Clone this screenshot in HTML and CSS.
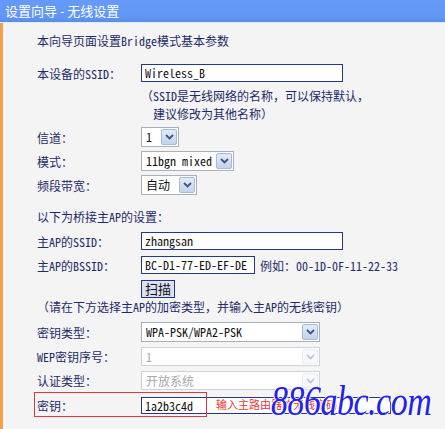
FILE: index.html
```html
<!DOCTYPE html>
<html lang="zh-CN">
<head>
  <meta charset="UTF-8" />
  <title>设置向导 - 无线设置</title>
  <link rel="stylesheet" href="styles.css">
</head>
<body>
  <div class="page">
    <div class="title-bar">设置向导 - 无线设置</div>
    <div class="panel">
      <div class="heading">本向导页面设置Bridge模式基本参数</div>

      <div class="row r-ssid">
        <div class="label">本设备的SSID：</div>
        <div class="input w202">Wireless_B</div>
      </div>
      <div class="note">
        <div>（SSID是无线网络的名称，可以保持默认，</div>
        <div class="indent">建议修改为其他名称）</div>
      </div>

      <div class="row r-sel first">
        <div class="label">信道：</div>
        <div class="select w38"><span class="val">1</span><span class="arrow"><svg width="9" height="6" viewBox="0 0 9 6"><path d="M1 1 L4.5 4.5 L8 1" fill="none" stroke="#3d5488" stroke-width="1.8"/></svg></span></div>
      </div>
      <div class="row r-sel">
        <div class="label">模式：</div>
        <div class="select w93"><span class="val">11bgn mixed</span><span class="arrow"><svg width="9" height="6" viewBox="0 0 9 6"><path d="M1 1 L4.5 4.5 L8 1" fill="none" stroke="#3d5488" stroke-width="1.8"/></svg></span></div>
      </div>
      <div class="row r-sel">
        <div class="label">频段带宽：</div>
        <div class="select w56"><span class="val">自动</span><span class="arrow"><svg width="9" height="6" viewBox="0 0 9 6"><path d="M1 1 L4.5 4.5 L8 1" fill="none" stroke="#3d5488" stroke-width="1.8"/></svg></span></div>
      </div>

      <div class="section">以下为桥接主AP的设置：</div>

      <div class="row r-ap">
        <div class="label">主AP的SSID：</div>
        <div class="input w202">zhangsan</div>
      </div>
      <div class="row r-bssid">
        <div class="label">主AP的BSSID：</div>
        <div class="input w114">BC-D1-77-ED-EF-DE</div>
        <div class="hint">例如：00-1D-0F-11-22-33</div>
      </div>
      <div class="row r-btn">
        <div class="label"></div>
        <div class="button">扫描</div>
      </div>

      <div class="section note2">（请在下方选择主AP的加密类型，并输入主AP的无线密钥）</div>

      <div class="row r-key">
        <div class="label">密钥类型：</div>
        <div class="select w179 tall"><span class="val">WPA-PSK/WPA2-PSK</span><span class="arrow"><svg width="9" height="6" viewBox="0 0 9 6"><path d="M1 1 L4.5 4.5 L8 1" fill="none" stroke="#3d5488" stroke-width="1.8"/></svg></span></div>
      </div>
      <div class="row r-dis">
        <div class="label">WEP密钥序号：</div>
        <div class="select w179 disabled"><span class="val">1</span><span class="arrow"><svg width="9" height="6" viewBox="0 0 9 6"><path d="M1 1 L4.5 4.5 L8 1" fill="none" stroke="#b7c2d6" stroke-width="1.6"/></svg></span></div>
      </div>
      <div class="row r-dis">
        <div class="label">认证类型：</div>
        <div class="select w179 disabled"><span class="val">开放系统</span><span class="arrow"><svg width="9" height="6" viewBox="0 0 9 6"><path d="M1 1 L4.5 4.5 L8 1" fill="none" stroke="#b7c2d6" stroke-width="1.6"/></svg></span></div>
      </div>
      <div class="row r-pass">
        <div class="label">密钥：</div>
        <div class="input w250">1a2b3c4d</div>
      </div>
    </div>

    <div class="mark-box"></div>
    <div class="mark-text">输入主路由器的无线密码</div>
    <div class="watermark">886abc.com</div>
  </div>
</body>
</html>
```

FILE: styles.css
```css
body {
  margin: 0;
  background: #f4f4f4;
  font-family: "Noto Sans Mono CJK SC", "Noto Sans CJK SC", monospace;
  font-size: 12px;
  color: #1d2b6b;
}

.page {
  width: 445px;
  height: 429px;
  overflow: hidden;
  position: relative;
}

.title-bar {
  height: 22px;
  line-height: 21px;
  padding-left: 5px;
  font-size: 13px;
  color: #fff;
  font-family: "Noto Sans CJK SC", sans-serif;
  background: linear-gradient(#659afb, #6197f7 75%, #5a8ce8);
  border-bottom: 1px solid #e2ecfd;
}

.panel {
  height: 406px;
  border-left: 3px solid #f3a04a;
  padding: 10px 0 0 34px;
  box-sizing: border-box;
}

.heading {
  line-height: 16px;
  height: 16px;
}

.row {
  display: flex;
  align-items: center;
}

.label {
  width: 104px;
  flex: none;
}

.input {
  height: 18px;
  box-sizing: border-box;
  border: 1px solid #24378a;
  background: #fff;
  color: #111;
  line-height: 16px;
  padding-left: 3px;
  white-space: nowrap;
  overflow: hidden;
}

.w202 { width: 202px; }
.w114 { width: 114px; }
.w250 { width: 250px; }
.w38 { width: 38px; }
.w93 { width: 93px; }
.w56 { width: 56px; }
.w179 { width: 179px; }

.r-ssid { margin-top: 15px; height: 18px; }

.note {
  margin-top: 5px;
  margin-left: 104px;
  line-height: 18px;
}

.note .indent {
  padding-left: 12px;
}

.select {
  display: flex;
  height: 20px;
  box-sizing: border-box;
  border: 1px solid #a9b0b9;
  background: #fff;
  color: #111;
}

.select .val {
  flex: 1;
  padding-left: 4px;
  line-height: 18px;
  white-space: nowrap;
  overflow: hidden;
}

.select .arrow {
  width: 16px;
  margin: 1px;
  box-sizing: border-box;
  border: 1px solid #a6badc;
  border-radius: 2px;
  background: linear-gradient(#e2ebf8, #c3d3ed);
  display: flex;
  align-items: center;
  justify-content: center;
}

.select.disabled {
  height: 19px;
  border-color: #cfd3d8;
  color: #a8a8a8;
}

.select.disabled .val {
  line-height: 17px;
}

.select.disabled .arrow {
  border-color: #e8edf4;
  background: #f6f8fb;
}

.r-sel { margin-top: 4px; }
.r-sel.first { margin-top: 4px; }

.section {
  margin-top: 14px;
  line-height: 16px;
}

.r-ap { margin-top: 7px; }
.r-bssid { margin-top: 6px; }

.hint {
  margin-left: 5px;
}

.r-btn { margin-top: 6px; }

.button {
  height: 18px;
  width: 34px;
  box-sizing: border-box;
  border: 1px solid #22337f;
  background: #dbe1f1;
  color: #111;
  font-size: 13px;
  line-height: 16px;
  text-align: center;
}

.section.note2 {
  margin-top: 1px;
  margin-left: 0;
}

.r-key { margin-top: 7px; }
.r-dis { margin-top: 5px; }

.r-pass {
  margin-top: 7px;
}

.r-pass .input {
  height: 17px;
  line-height: 15px;
}

.mark-box {
  position: absolute;
  left: 34px;
  top: 392px;
  width: 173px;
  height: 25px;
  box-sizing: border-box;
  border: 1px solid #e0383c;
}

.mark-text {
  position: absolute;
  left: 216px;
  top: 396px;
  font-family: "Noto Sans CJK SC", sans-serif;
  font-size: 11px;
  line-height: 16px;
  color: #e53a34;
}

.watermark {
  position: absolute;
  left: 271px;
  top: 386px;
  font-family: "Liberation Serif", serif;
  font-style: italic;
  font-size: 34px;
  line-height: 40px;
  color: #2222ee;
  letter-spacing: -0.5px;
  transform: scaleY(1.25);
  transform-origin: bottom left;
  text-shadow: 1px 0 #fff, -1px 0 #fff;
}
```
